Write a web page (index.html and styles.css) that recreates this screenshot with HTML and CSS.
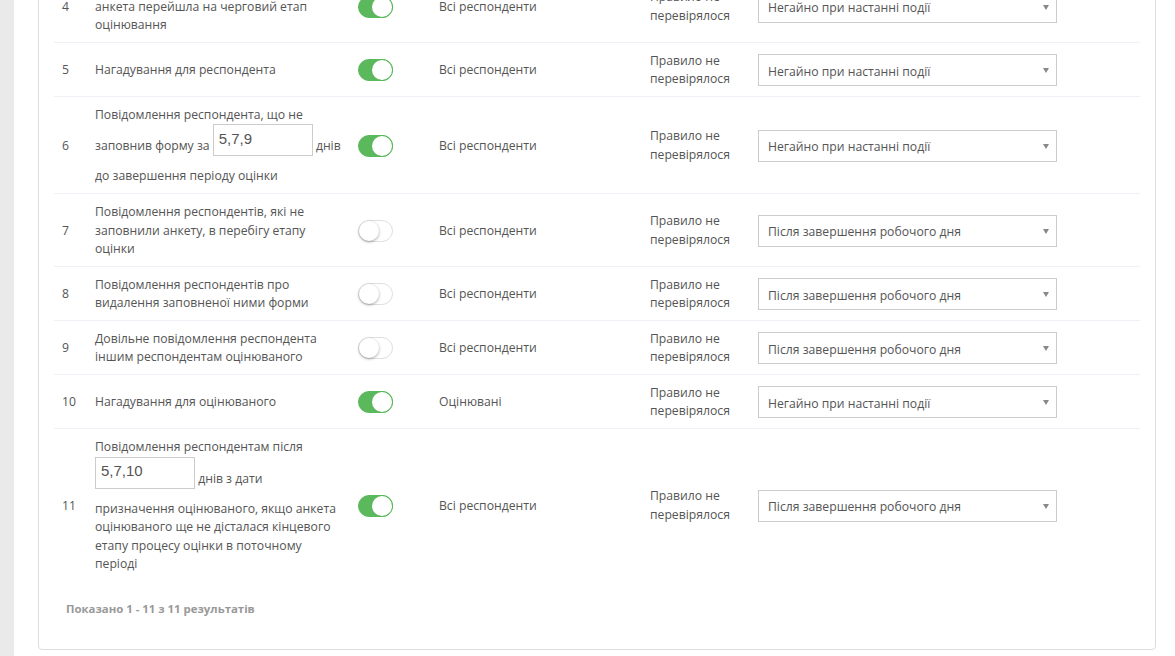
FILE: index.html
```html
<!DOCTYPE html>
<html lang="uk">
<head>
    <meta charset="utf-8">
    <link rel="stylesheet" href="styles.css">
</head>
<body>
    <div class="layout">
        <div class="sidebar"></div>
        <div class="content">
            <div class="panel">
                <table class="rules">
                    <colgroup>
                        <col class="col-num">
                        <col class="col-name">
                        <col class="col-switch">
                        <col class="col-who">
                        <col class="col-state">
                        <col>
                    </colgroup>
                    <tbody>
                        <tr>
                            <td>4</td>
                            <td>Повідомлення оцінюваного про те, що анкета перейшла на черговий етап оцінювання</td>
                            <td><span class="switch on"></span></td>
                            <td>Всі респонденти</td>
                            <td>Правило не перевірялося</td>
                            <td>
                                <div class="select-wrap">
                                    <select><option>Негайно при настанні події</option></select>
                                </div>
                            </td>
                        </tr>
                        <tr>
                            <td>5</td>
                            <td>Нагадування для респондента</td>
                            <td><span class="switch on"></span></td>
                            <td>Всі респонденти</td>
                            <td>Правило не перевірялося</td>
                            <td>
                                <div class="select-wrap">
                                    <select><option>Негайно при настанні події</option></select>
                                </div>
                            </td>
                        </tr>
                        <tr>
                            <td>6</td>
                            <td>Повідомлення респондента, що не заповнив форму за <input class="days" type="text" value="5,7,9"> днів до завершення періоду оцінки</td>
                            <td><span class="switch on"></span></td>
                            <td>Всі респонденти</td>
                            <td>Правило не перевірялося</td>
                            <td>
                                <div class="select-wrap">
                                    <select><option>Негайно при настанні події</option></select>
                                </div>
                            </td>
                        </tr>
                        <tr>
                            <td>7</td>
                            <td>Повідомлення респондентів, які не заповнили анкету, в перебігу етапу оцінки</td>
                            <td><span class="switch"></span></td>
                            <td>Всі респонденти</td>
                            <td>Правило не перевірялося</td>
                            <td>
                                <div class="select-wrap">
                                    <select><option>Після завершення робочого дня</option></select>
                                </div>
                            </td>
                        </tr>
                        <tr>
                            <td>8</td>
                            <td>Повідомлення респондентів про видалення заповненої ними форми</td>
                            <td><span class="switch"></span></td>
                            <td>Всі респонденти</td>
                            <td>Правило не перевірялося</td>
                            <td>
                                <div class="select-wrap">
                                    <select><option>Після завершення робочого дня</option></select>
                                </div>
                            </td>
                        </tr>
                        <tr>
                            <td>9</td>
                            <td>Довільне повідомлення респондента іншим респондентам оцінюваного</td>
                            <td><span class="switch"></span></td>
                            <td>Всі респонденти</td>
                            <td>Правило не перевірялося</td>
                            <td>
                                <div class="select-wrap">
                                    <select><option>Після завершення робочого дня</option></select>
                                </div>
                            </td>
                        </tr>
                        <tr>
                            <td>10</td>
                            <td>Нагадування для оцінюваного</td>
                            <td><span class="switch on"></span></td>
                            <td>Оцінювані</td>
                            <td>Правило не перевірялося</td>
                            <td>
                                <div class="select-wrap">
                                    <select><option>Негайно при настанні події</option></select>
                                </div>
                            </td>
                        </tr>
                        <tr>
                            <td>11</td>
                            <td>Повідомлення респондентам після <input class="days" type="text" value="5,7,10"> днів з дати призначення оцінюваного, якщо анкета оцінюваного ще не дісталася кінцевого етапу процесу оцінки в поточному періоді</td>
                            <td><span class="switch on"></span></td>
                            <td>Всі респонденти</td>
                            <td>Правило не перевірялося</td>
                            <td>
                                <div class="select-wrap">
                                    <select><option>Після завершення робочого дня</option></select>
                                </div>
                            </td>
                        </tr>
                    </tbody>
                </table>
                <div class="summary">Показано 1 - 11 з 11 результатів</div>
            </div>
        </div>
    </div>
</body>
</html>
```

FILE: styles.css
```css
body {
    font-family: "Open Sans", "Noto Sans", sans-serif;
    font-size: 12.2px;
    line-height: 18.57px;
    color: #555;
    background-color: white;
    margin: 0;
    padding: 0;
}
.layout {
    display: flex;
    min-height: 100vh;
}
.sidebar {
    width: 14px;
    flex-shrink: 0;
    background-color: #eaeaea;
}
.content {
    flex: 1;
    padding: 0 19px 8px 24px;
}
.panel {
    margin-top: -47px;
    background-color: white;
    border: 1px solid #ddd;
    border-radius: 4px;
    padding: 15px 15px 31px;
}
.rules {
    width: 100%;
    table-layout: fixed;
    border-collapse: collapse;
}
.col-num { width: 33px; }
.col-name { width: 263px; }
.col-switch { width: 81px; }
.col-who { width: 211px; }
.col-state { width: 108px; }
.rules td {
    padding: 9px 8px 7px;
    vertical-align: middle;
    border-top: 1px solid #eef1f5;
}
.days {
    width: 100px;
    height: 32px;
    box-sizing: border-box;
    margin: 0 0 11px;
    padding: 0 5px 4px;
    border: 1px solid #ccc;
    font-family: "Liberation Sans", Arial, sans-serif;
    font-size: 15px;
    color: #555;
    vertical-align: 6px;
}
.switch {
    display: block;
    position: relative;
    width: 35px;
    height: 22px;
    box-sizing: border-box;
    border: 1px solid #dfdfdf;
    border-radius: 11px;
    background-color: white;
}
.switch::after {
    content: "";
    position: absolute;
    top: 0;
    left: 0;
    width: 20px;
    height: 20px;
    border-radius: 50%;
    background-color: white;
    box-shadow: 0 1px 3px rgba(0, 0, 0, 0.35);
}
.switch.on {
    border-color: #5cb85c;
    background-color: #5cb85c;
}
.switch.on::after {
    left: auto;
    right: 0;
    box-shadow: 0 0 0 1px #5cb85c;
}
.select-wrap {
    position: relative;
    width: 299px;
}
.select-wrap select {
    display: block;
    width: 100%;
    height: 32px;
    padding: 2px 9px 0;
    border: 1px solid #ccc;
    border-radius: 0;
    background-color: white;
    font-family: "Open Sans", "Noto Sans", sans-serif;
    font-size: 12.2px;
    color: #555;
    appearance: none;
    -webkit-appearance: none;
}
.select-wrap::after {
    content: "";
    position: absolute;
    right: 8px;
    top: 14px;
    border-left: 3px solid transparent;
    border-right: 3px solid transparent;
    border-top: 5px solid #888;
}
.summary {
    padding: 19px 12px 0;
    font-size: 11.4px;
    font-weight: bold;
    color: #999;
}
```
